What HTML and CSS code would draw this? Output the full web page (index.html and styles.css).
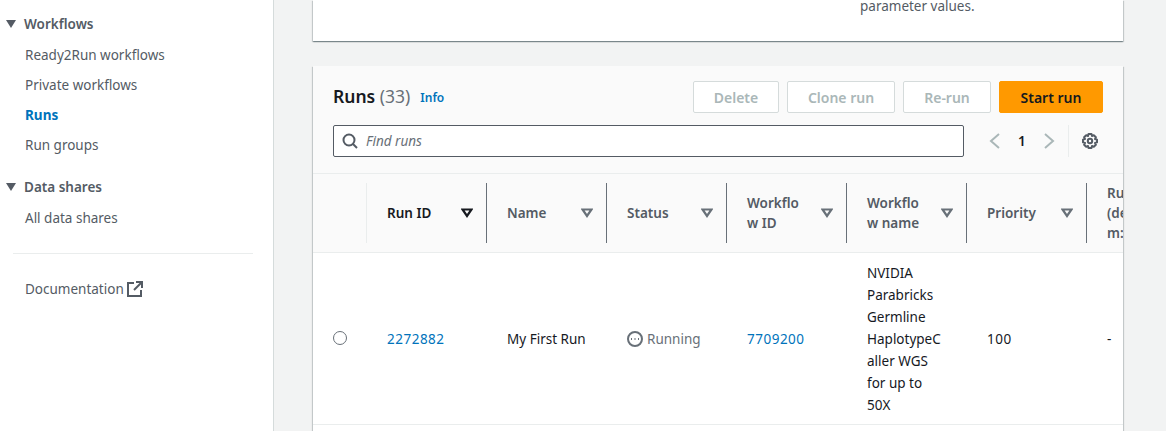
FILE: index.html
```html
<!DOCTYPE html>
<html>
  <head>
    <meta charset="utf-8">
    <link rel="stylesheet" href="styles.css">
    <title>Runs</title>
  </head>
  <body>
    <nav class="sidebar">
      <h3 class="nav-head"><span class="caret"></span>Workflows</h3>
      <ul class="nav-list">
        <li><a href="#">Ready2Run workflows</a></li>
        <li><a href="#">Private workflows</a></li>
        <li><a href="#" class="active">Runs</a></li>
        <li><a href="#">Run groups</a></li>
      </ul>
      <h3 class="nav-head"><span class="caret"></span>Data shares</h3>
      <ul class="nav-list">
        <li><a href="#">All data shares</a></li>
      </ul>
      <hr class="nav-rule">
      <a href="#" class="doc-link">Documentation
        <svg width="16" height="16" viewBox="0 0 16 16" fill="none" stroke="#545b64" stroke-width="2">
          <path d="M7 2H1V15H14V9"/>
          <path d="M9 1H15V7"/>
          <path d="M14.500 1.500L7 9"/>
        </svg>
      </a>
    </nav>

    <main class="content">
      <section class="card top-card">
        <p>parameter values.</p>
      </section>

      <section class="card runs-card">
        <header class="runs-header">
          <div class="title-row">
            <h2>Runs <span class="count">(33)</span></h2>
            <a href="#" class="info">Info</a>
            <div class="actions">
              <button class="btn btn-delete" disabled>Delete</button>
              <button class="btn btn-clone" disabled>Clone run</button>
              <button class="btn btn-rerun" disabled>Re-run</button>
              <button class="btn btn-primary">Start run</button>
            </div>
          </div>
          <div class="filter-row">
            <div class="search">
              <svg width="16" height="16" viewBox="0 0 16 16" fill="none" stroke="#545b64" stroke-width="2">
                <circle cx="7" cy="7" r="5.500"/>
                <path d="M11 11L15 15"/>
              </svg>
              <span>Find runs</span>
            </div>
            <div class="pager">
              <svg width="12" height="16" viewBox="0 0 12 16" fill="none" stroke="#aab7b8" stroke-width="2"><path d="M10 1L2 8L10 15"/></svg>
              <span>1</span>
              <svg width="12" height="16" viewBox="0 0 12 16" fill="none" stroke="#aab7b8" stroke-width="2"><path d="M2 1L10 8L2 15"/></svg>
            </div>
            <div class="settings">
              <svg width="16" height="16" viewBox="0 0 16 16" fill="none" stroke="#545b64" stroke-width="2">
                <circle cx="8" cy="8" r="2.200"/>
                <path d="M6.500 1H9.500L10 3L11.800 2.200L13.900 4.300L13 6L15 6.600V9.400L13 10L13.900 11.700L11.800 13.800L10 13L9.500 15H6.500L6 13L4.200 13.800L2.100 11.700L3 10L1 9.400V6.600L3 6L2.100 4.300L4.200 2.200L6 3Z" stroke-linejoin="round"/>
              </svg>
            </div>
          </div>
        </header>

        <div class="table-wrap">
          <table class="runs-table">
            <thead>
              <tr>
                <th class="col-radio"><div class="th-inner"></div></th>
                <th><div class="th-inner sorted"><span>Run ID</span><svg class="sort" width="12" height="10" viewBox="0 0 12 10"><path d="M1.500 1.500H10.500L6 8Z"/></svg></div></th>
                <th><div class="th-inner"><span>Name</span><svg class="sort" width="12" height="10" viewBox="0 0 12 10"><path d="M1.500 1.500H10.500L6 8Z"/></svg></div></th>
                <th><div class="th-inner"><span>Status</span><svg class="sort" width="12" height="10" viewBox="0 0 12 10"><path d="M1.500 1.500H10.500L6 8Z"/></svg></div></th>
                <th><div class="th-inner"><span>Workflow ID</span><svg class="sort" width="12" height="10" viewBox="0 0 12 10"><path d="M1.500 1.500H10.500L6 8Z"/></svg></div></th>
                <th><div class="th-inner"><span>Workflow name</span><svg class="sort" width="12" height="10" viewBox="0 0 12 10"><path d="M1.500 1.500H10.500L6 8Z"/></svg></div></th>
                <th><div class="th-inner"><span>Priority</span><svg class="sort" width="12" height="10" viewBox="0 0 12 10"><path d="M1.500 1.500H10.500L6 8Z"/></svg></div></th>
                <th><div class="th-inner"><span>Run (demo m:</span><svg class="sort" width="12" height="10" viewBox="0 0 12 10"><path d="M1.500 1.500H10.500L6 8Z"/></svg></div></th>
              </tr>
            </thead>
            <tbody>
              <tr>
                <td class="col-radio"><span class="radio"></span></td>
                <td class="num"><a href="#">2272882</a></td>
                <td>My First Run</td>
                <td>
                  <span class="status">
                    <svg width="16" height="16" viewBox="0 0 16 16" fill="none" stroke="#687078" stroke-width="2">
                      <circle cx="8" cy="8" r="7"/>
                      <path d="M4 8H5M7.500 8H8.500M11 8H12"/>
                    </svg>
                    Running
                  </span>
                </td>
                <td class="num"><a href="#">7709200</a></td>
                <td>NVIDIA Parabricks Germline HaplotypeCaller WGS for up to 50X</td>
                <td class="num">100</td>
                <td>-</td>
              </tr>
            </tbody>
          </table>
        </div>
      </section>
    </main>
  </body>
</html>
```

FILE: styles.css
```css
* {
  box-sizing: border-box;
}

html, body {
  height: 431px;
  overflow: hidden;
}

body {
  margin: 0;
  display: flex;
  background-color: #f2f3f3;
  color: #16191f;
  font-family: "Noto Sans", "Open Sans", sans-serif;
  font-size: 13.500px;
  line-height: 22px;
}

a {
  text-decoration: none;
  color: #0073bb;
}

/* sidebar */
.sidebar {
  width: 274px;
  height: 431px;
  flex-shrink: 0;
  background-color: #fff;
  border-right: 1px solid #d5dbdb;
  padding-top: 13px;
}

.nav-head {
  margin: 0;
  display: flex;
  align-items: center;
  height: 22px;
  padding-left: 6px;
  font-size: 13.500px;
  font-weight: 600;
  color: #545b64;
}

.caret {
  width: 0;
  height: 0;
  margin-right: 8px;
  border-left: 5px solid transparent;
  border-right: 5px solid transparent;
  border-top: 8px solid #545b64;
}

.nav-list {
  list-style: none;
  margin: 0 0 16px;
  padding: 5px 0 0 25px;
}

.nav-list li {
  height: 30px;
  padding-top: 4px;
}

.nav-list a {
  color: #545b64;
}

.nav-list a.active {
  color: #0073bb;
  font-weight: 700;
}

.nav-rule {
  margin: 20px 20px 24px 13px;
  border: none;
  border-top: 1px solid #eaeded;
}

.doc-link {
  display: flex;
  align-items: center;
  gap: 3px;
  padding-left: 25px;
  color: #545b64;
}

/* main column */
.content {
  flex: 1;
  min-width: 0;
  padding: 0 43px 0 39px;
}

.card {
  background-color: #fff;
  box-shadow: 0 1px 1px 0 rgba(0, 28, 36, 0.3), 1px 1px 1px 0 rgba(0, 28, 36, 0.15), -1px 1px 1px 0 rgba(0, 28, 36, 0.15);
}

.top-card {
  height: 41px;
  padding-left: 547px;
}

.top-card p {
  margin: 0;
  line-height: 12px;
  color: #545b64;
}

.runs-card {
  margin-top: 25px;
  height: 365px;
}

.runs-header {
  height: 108px;
  padding: 15px 20px 0;
  background-color: #fafafa;
  border-bottom: 1px solid #eaeded;
}

.title-row {
  display: flex;
  align-items: center;
  height: 32px;
}

.title-row h2 {
  margin: 0 0 2px;
  font-size: 17.500px;
  font-weight: 600;
  line-height: 30px;
}

.count {
  font-weight: 400;
  color: #687078;
}

.info {
  margin-left: 10px;
  margin-top: 1px;
  font-size: 12px;
  font-weight: 600;
}

.actions {
  margin-left: auto;
  display: flex;
  gap: 8px;
}

.btn {
  height: 32px;
  border: 1px solid #d5dbdb;
  border-radius: 2px;
  background-color: #fff;
  color: #aab7b8;
  font-family: inherit;
  font-size: 14px;
  font-weight: 600;
  padding: 0;
}

.btn-delete {
  width: 86px;
}

.btn-clone {
  width: 108px;
}

.btn-rerun {
  width: 88px;
}

.btn-primary {
  width: 104px;
  background-color: #ff9900;
  border-color: #ff9900;
  color: #16191f;
}

.filter-row {
  display: flex;
  align-items: center;
  margin-top: 12px;
  height: 32px;
}

.search {
  width: 631px;
  height: 32px;
  display: flex;
  align-items: center;
  gap: 8px;
  padding-left: 8px;
  background-color: #fff;
  border: 1px solid #545b64;
  border-radius: 2px;
  font-style: italic;
  color: #687078;
}

.pager {
  display: flex;
  align-items: center;
  gap: 17px;
  margin-left: 25px;
  font-weight: 600;
}

.settings {
  height: 32px;
  margin-left: 13px;
  padding: 8px 0 0 13px;
  border-left: 1px solid #eaeded;
}

/* table */
.table-wrap {
  overflow: hidden;
}

.runs-table {
  width: 894px;
  table-layout: fixed;
  border-collapse: collapse;
}

.runs-table th {
  width: 120px;
  height: 78px;
  padding: 0;
  text-align: left;
  background-color: #fafafa;
  border-bottom: 1px solid #eaeded;
  color: #545b64;
  font-weight: 600;
  line-height: 20px;
}

.runs-table th.col-radio,
.runs-table td.col-radio {
  width: 54px;
}

.th-inner {
  display: flex;
  align-items: center;
  height: 60px;
  padding: 0 13px 0 20px;
  border-right: 1px solid #687078;
}

.col-radio .th-inner {
  border-right-color: #eaeded;
}

.th-inner span {
  flex: 1;
  min-width: 0;
  overflow-wrap: anywhere;
}

.sort {
  flex-shrink: 0;
  margin-left: 14px;
  fill: none;
  stroke: #687078;
  stroke-width: 2.200;
}

.sorted {
  color: #16191f;
}

.sorted .sort {
  stroke: #16191f;
}

.runs-table td {
  padding: 9px 20px 8px;
  border-bottom: 1px solid #eaeded;
  overflow-wrap: anywhere;
  vertical-align: middle;
}

.runs-table td.num {
  letter-spacing: 0.500px;
}

.runs-table td.col-radio {
  padding: 0 0 0 20px;
}

.radio {
  display: block;
  width: 14px;
  height: 14px;
  border: 1px solid #687078;
  border-radius: 50%;
}

.status {
  display: flex;
  align-items: center;
  gap: 4px;
  color: #687078;
}
```
